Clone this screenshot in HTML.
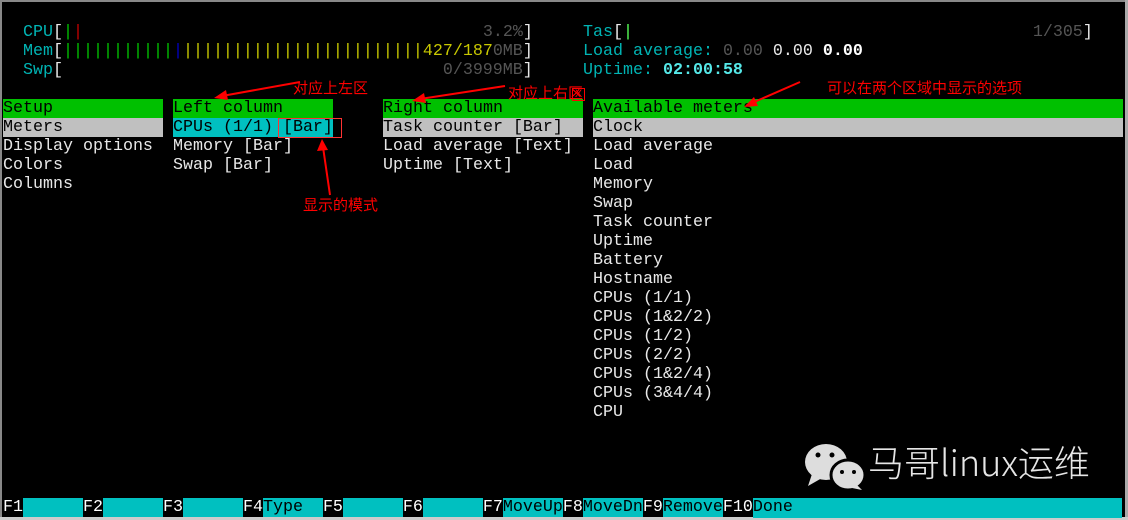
<!DOCTYPE html>
<html><head><meta charset="utf-8"><style>
html,body{margin:0;padding:0;background:#000;width:1128px;height:520px;overflow:hidden}
body{position:relative;font-family:"Liberation Mono",monospace;font-size:16.67px;color:#e8e8e8}
.r{position:absolute;height:19px;line-height:20px;white-space:pre}
.g{background:#00c000;color:#000}.s{background:#c0c0c0;color:#000}.c{background:#00c0c0;color:#000}
.cy{color:#00b4b4}.gr{color:#555}.gn{color:#00c000}.rd{color:#c00000}.bl{color:#0000c0}.ye{color:#c8c800}
.cn{position:absolute;color:#f00;font-family:"Noto Sans CJK SC",sans-serif;font-size:15px;line-height:17px;white-space:nowrap}
.fk{color:#fff}
</style></head><body>
<div style="position:absolute;left:0;top:0;width:1128px;height:2px;background:#888"></div>
<div style="position:absolute;left:0;top:0;width:2px;height:520px;background:#888"></div>
<div style="position:absolute;left:1125px;top:0;width:3px;height:520px;background:#aaa"></div>
<div style="position:absolute;left:0;top:517px;width:1128px;height:3px;background:#ccc"></div>

<div class="r" style="left:23px;top:23px"><span class="cy">CPU</span>[<span class="gn">|</span><span class="rd">|</span>                                        <span class="gr">3.2%</span>]</div>
<div class="r" style="left:23px;top:42px"><span class="cy">Mem</span>[<span class="gn">|||||||||||</span><span class="bl">|</span><span class="ye">||||||||||||||||||||||||427/187</span><span class="gr">0MB</span>]</div>
<div class="r" style="left:23px;top:61px"><span class="cy">Swp</span>[                                      <span class="gr">0/3999MB</span>]</div>
<div class="r" style="left:583px;top:23px"><span class="cy">Tas</span>[<span style="color:#5f5">|</span>                                        <span class="gr">1/305</span>]</div>
<div class="r" style="left:583px;top:42px"><span class="cy">Load average: </span><span class="gr">0.00</span> 0.00 <b style="color:#fff">0.00</b></div>
<div class="r" style="left:583px;top:61px"><span class="cy">Uptime: </span><b style="color:#55e8e8">02:00:58</b></div>

<div class="r g" style="left:3px;top:99px;width:160px">Setup</div>
<div class="r s" style="left:3px;top:118px;width:160px">Meters</div>
<div class="r" style="left:3px;top:137px">Display options</div>
<div class="r" style="left:3px;top:156px">Colors</div>
<div class="r" style="left:3px;top:175px">Columns</div>

<div class="r g" style="left:173px;top:99px;width:160px">Left column</div>
<div class="r c" style="left:173px;top:118px;width:160px">CPUs (1/1) [Bar]</div>
<div class="r" style="left:173px;top:137px">Memory [Bar]</div>
<div class="r" style="left:173px;top:156px">Swap [Bar]</div>

<div class="r g" style="left:383px;top:99px;width:200px">Right column</div>
<div class="r s" style="left:383px;top:118px;width:200px">Task counter [Bar]</div>
<div class="r" style="left:383px;top:137px">Load average [Text]</div>
<div class="r" style="left:383px;top:156px">Uptime [Text]</div>

<div class="r g" style="left:593px;top:99px;width:530px">Available meters</div>
<div class="r s" style="left:593px;top:118px;width:530px">Clock</div>
<div class="r" style="left:593px;top:137px">Load average</div>
<div class="r" style="left:593px;top:156px">Load</div>
<div class="r" style="left:593px;top:175px">Memory</div>
<div class="r" style="left:593px;top:194px">Swap</div>
<div class="r" style="left:593px;top:213px">Task counter</div>
<div class="r" style="left:593px;top:232px">Uptime</div>
<div class="r" style="left:593px;top:251px">Battery</div>
<div class="r" style="left:593px;top:270px">Hostname</div>
<div class="r" style="left:593px;top:289px">CPUs (1/1)</div>
<div class="r" style="left:593px;top:308px">CPUs (1&amp;2/2)</div>
<div class="r" style="left:593px;top:327px">CPUs (1/2)</div>
<div class="r" style="left:593px;top:346px">CPUs (2/2)</div>
<div class="r" style="left:593px;top:365px">CPUs (1&amp;2/4)</div>
<div class="r" style="left:593px;top:384px">CPUs (3&amp;4/4)</div>
<div class="r" style="left:593px;top:403px">CPU</div>

<div class="r" style="left:3px;top:498px;width:1122px"><span class="fk">F1</span><span class="c">      </span><span class="fk">F2</span><span class="c">      </span><span class="fk">F3</span><span class="c">      </span><span class="fk">F4</span><span class="c">Type  </span><span class="fk">F5</span><span class="c">      </span><span class="fk">F6</span><span class="c">      </span><span class="fk">F7</span><span class="c">MoveUp</span><span class="fk">F8</span><span class="c">MoveDn</span><span class="fk">F9</span><span class="c">Remove</span><span class="fk">F10</span><span class="c" style="display:inline-block;width:369px">Done</span></div>

<div style="position:absolute;left:278px;top:118px;width:62px;height:18px;border:1px solid #f33"></div>
<div style="position:absolute;left:572px;top:88px;width:11px;height:11px;border:1px solid #f00;color:#f00;font-size:11px;line-height:11px;text-align:center;font-family:'Liberation Sans',sans-serif">X</div>

<div class="cn" style="left:293px;top:79px">对应上左区</div>
<div class="cn" style="left:508px;top:84px">对应上右区</div>
<div class="cn" style="left:303px;top:196px">显示的模式</div>
<div class="cn" style="left:827px;top:79px">可以在两个区域中显示的选项</div>

<svg width="1128" height="520" style="position:absolute;left:0;top:0">
<g fill="#f00" stroke="#f00">
<line x1="300" y1="82" x2="222" y2="96" stroke-width="2"/><polygon points="214,98 226,90 228,100" stroke="none"/>
<line x1="505" y1="86" x2="420" y2="99" stroke-width="2"/><polygon points="412,101 424,93 426,103" stroke="none"/>
<line x1="330" y1="195" x2="323" y2="147" stroke-width="2"/><polygon points="322,139 317,151 328,150" stroke="none"/>
<line x1="800" y1="82" x2="752" y2="103" stroke-width="2"/><polygon points="744,107 754,97 758,106" stroke="none"/>
</g>
<g fill="#ddd">
<ellipse cx="826" cy="462" rx="21" ry="18"/><polygon points="812,474 808,486 822,478"/>
<ellipse cx="848" cy="475" rx="17" ry="15" stroke="#000" stroke-width="3"/><polygon points="856,484 862,490 852,488"/>
</g>
<g fill="#000"><circle cx="818" cy="455" r="2.5"/><circle cx="832" cy="455" r="2.5"/><circle cx="842" cy="472" r="2"/><circle cx="854" cy="472" r="2"/></g>
</svg>
<div style="position:absolute;left:868px;top:438px;color:#e6e6e6;font-family:'Noto Sans CJK SC',sans-serif;font-size:36px;line-height:46px;white-space:nowrap;font-weight:300">马哥linux运维</div>
</body></html>
